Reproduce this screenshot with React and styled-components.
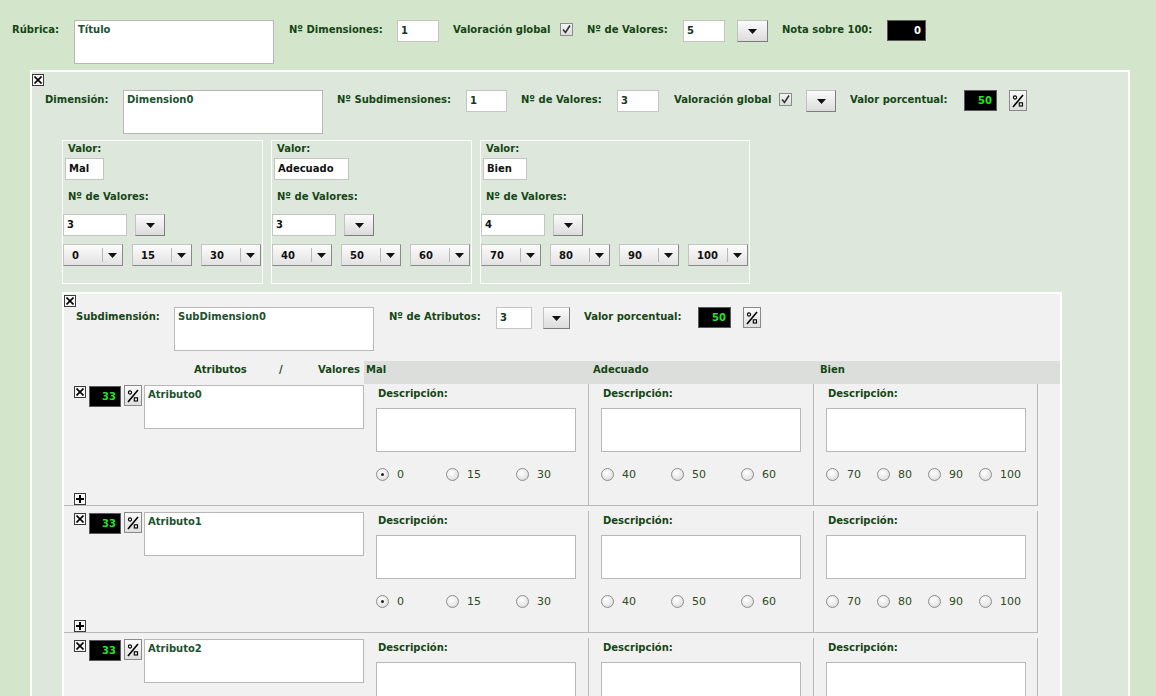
import React from "react";
import styled, { createGlobalStyle } from "styled-components";

const LABEL = "#144614";
const LINE = "#b9b9b9";
const BOLD_FONT = `"DejaVu Sans", Verdana, sans-serif`;

const GlobalStyle = createGlobalStyle`
  html, body {
    margin: 0;
    padding: 0;
    background: #d3e5cb;
  }
  body {
    font-family: ${BOLD_FONT};
    font-size: 10px;
    color: ${LABEL};
  }
`;

const Page = styled.div`
  height: 696px;
  overflow: hidden;
`;

const Line = styled.div`
  display: flex;
  align-items: flex-start;
  padding-left: ${(p) => p.$pl || 0}px;
  margin-top: ${(p) => p.$mt || 0}px;
`;

const Label = styled.span`
  flex: none;
  width: ${(p) => (p.$w ? p.$w + "px" : "auto")};
  margin-top: ${(p) => (p.$mt === undefined ? 3 : p.$mt)}px;
  margin-left: ${(p) => p.$ml || 0}px;
  font-weight: bold;
  font-size: 10px;
  line-height: 13px;
  color: ${LABEL};
  white-space: nowrap;
`;

const TextBox = styled.div`
  flex: none;
  box-sizing: border-box;
  width: ${(p) => p.$w || 200}px;
  height: 44px;
  margin-right: ${(p) => p.$mr || 0}px;
  padding: 2px 3px;
  background: #fff;
  border: 1px solid #b8b8b8;
  font-weight: bold;
  line-height: 14px;
  color: #1b5230;
`;

const Input = styled.div`
  flex: none;
  box-sizing: border-box;
  width: ${(p) => p.$w}px;
  height: 22px;
  margin-right: ${(p) => p.$mr || 0}px;
  margin-left: ${(p) => p.$ml || 0}px;
  padding-left: 3px;
  background: #fff;
  border: 1px solid #c4c4c4;
  font-weight: bold;
  line-height: 20px;
  color: ${(p) => p.$color || "#14361a"};
`;

const Check = styled.span`
  flex: none;
  box-sizing: border-box;
  width: 13px;
  height: 13px;
  margin-top: 3px;
  margin-right: ${(p) => p.$mr || 0}px;
  border: 1px solid #8c8c8c;
  background: linear-gradient(#f4f4f4, #dcdcdc);
  display: flex;
  align-items: center;
  justify-content: center;
`;

const DropBtn = styled.span`
  flex: none;
  box-sizing: border-box;
  width: ${(p) => p.$w || 30}px;
  height: 22px;
  margin-right: ${(p) => p.$mr || 0}px;
  border: 1px solid;
  border-color: #c2c2c2 #7d7d7d #7d7d7d #c2c2c2;
  background: linear-gradient(#fbfbfb, #dcdcdc);
  display: flex;
  align-items: center;
  justify-content: center;
`;

const Score = styled.span`
  flex: none;
  box-sizing: border-box;
  width: ${(p) => p.$w}px;
  height: 21px;
  margin-right: ${(p) => p.$mr || 0}px;
  margin-top: ${(p) => p.$mt || 0}px;
  padding-right: 4px;
  background: #000;
  border: 1px solid #5a5a5a;
  text-align: right;
  font-weight: bold;
  line-height: 19px;
  color: ${(p) => p.$color || "#22e622"};
`;

const PctBtn = styled.span`
  flex: none;
  box-sizing: border-box;
  width: 18px;
  height: 21px;
  margin-right: ${(p) => p.$mr || 0}px;
  margin-top: ${(p) => p.$mt || 0}px;
  border: 1px solid #8a8a8a;
  background: linear-gradient(#fafafa, #dedede);
  display: flex;
  align-items: center;
  justify-content: center;
`;

const SmallBtn = styled.span`
  flex: none;
  box-sizing: border-box;
  display: flex;
  align-items: center;
  justify-content: center;
  width: 12px;
  height: 12px;
  margin-top: ${(p) => p.$mt || 0}px;
  margin-right: ${(p) => p.$mr || 0}px;
  border: 1px solid #3a3a3a;
  background: #f6f6f6;
`;

const DimPanel = styled.div`
  width: 1100px;
  box-sizing: border-box;
  margin: 6px 0 0 30px;
  border: 2px solid #fff;
  background: #dde7dc;
  height: 640px;
`;

const ValueBoxes = styled.div`
  display: flex;
  gap: 8px;
  margin: 6px 0 0 30px;
`;

const ValueBox = styled.div`
  box-sizing: border-box;
  height: 144px;
  border: 1px solid #fff;
  padding: 1px 1px 0 0;
`;

const SelectRow = styled.div`
  display: flex;
  gap: 9px;
  margin-top: 8px;
`;

const Select = styled.span`
  box-sizing: border-box;
  width: 60px;
  height: 22px;
  border: 1px solid;
  border-color: #c4c4c4 #8a8a8a #8a8a8a #c4c4c4;
  background: linear-gradient(#fcfcfc, #e2e2e2);
  display: flex;
  align-items: center;
  font-weight: bold;
  color: #111;
`;

const SelectText = styled.span`
  flex: 1;
  padding-left: 8px;
`;

const SelectArrow = styled.span`
  width: 19px;
  height: 14px;
  border-left: 1px solid #b8b8b8;
  display: flex;
  align-items: center;
  justify-content: center;
`;

const SubPanel = styled.div`
  width: 1000px;
  box-sizing: border-box;
  margin: 8px 0 0 30px;
  border: 2px solid #fff;
  border-bottom: none;
  background: #f1f1f1;
  height: 420px;
`;

const HeaderRow = styled.div`
  display: flex;
  margin-top: 10px;
  height: 23px;
`;

const HeaderLeft = styled.div`
  width: 300px;
  display: flex;
  padding: 2px 0 0 130px;
  box-sizing: border-box;
  font-weight: bold;
  line-height: 13px;
`;

const HeaderWord = styled.span`
  width: ${(p) => (p.$w ? p.$w + "px" : "auto")};
  white-space: nowrap;
`;

const HeaderGrey = styled.div`
  flex: 1;
  display: flex;
  background: #dcdedb;
`;

const HeaderCell = styled.span`
  width: ${(p) => p.$w}px;
  padding: 2px 0 0 2px;
  font-weight: bold;
  line-height: 13px;
`;

const AttrRow = styled.div`
  display: flex;
  box-sizing: border-box;
  width: fit-content;
  height: 122px;
  margin-bottom: 5px;
  border-bottom: 1px solid ${LINE};
`;

const AttrLeft = styled.div`
  width: 300px;
  box-sizing: border-box;
  padding: 1px 0 0 10px;
  display: flex;
  flex-direction: column;
  justify-content: space-between;
`;

const AttrTop = styled.div`
  display: flex;
  align-items: flex-start;
`;

const Cell = styled.div`
  width: ${(p) => p.$w}px;
  box-sizing: border-box;
  border-right: 1px solid ${LINE};
  padding: 3px 0 0 12px;
`;

const DescBox = styled.div`
  width: 200px;
  height: 44px;
  box-sizing: border-box;
  margin-top: 8px;
  background: #fff;
  border: 1px solid #b8b8b8;
`;

const RadioGroup = styled.div`
  display: flex;
  margin-top: 16px;
`;

const RadioItem = styled.span`
  width: ${(p) => p.$pitch}px;
  display: flex;
  align-items: center;
  gap: 8px;
  font-family: "DejaVu Sans", Verdana, sans-serif;
  font-size: 11px;
  color: #2f4b22;
`;

const RadioCircle = styled.span`
  width: 13px;
  height: 13px;
  box-sizing: border-box;
  border-radius: 50%;
  border: 1px solid #8d8d8d;
  background: radial-gradient(circle at 40% 35%, #ffffff, #e9e9e9 55%, #cfcfcf);
  display: flex;
  align-items: center;
  justify-content: center;
  &::after {
    content: "";
    width: 3px;
    height: 3px;
    border-radius: 50%;
    background: ${(p) => (p.$on ? "#222" : "transparent")};
  }
`;

const Arrow = () => (
  <svg width="9" height="5" viewBox="0 0 9 5">
    <polygon points="0,0 9,0 4.5,5" fill="#111" />
  </svg>
);

const CheckMark = () => (
  <svg width="11" height="11" viewBox="0 0 11 11">
    <path d="M2 5.5 L4.5 8.5 L9 1.5" fill="none" stroke="#333" strokeWidth="1.6" />
  </svg>
);

const XIcon = () => (
  <svg width="8" height="8" viewBox="0 0 8 8">
    <path d="M0.5 0.5 L7.5 7.5 M7.5 0.5 L0.5 7.5" stroke="#000" strokeWidth="1.6" />
  </svg>
);

const PlusIcon = () => (
  <svg width="8" height="8" viewBox="0 0 8 8">
    <path d="M4 0 V8 M0 4 H8" stroke="#000" strokeWidth="2" />
  </svg>
);

const PctIcon = () => (
  <svg width="12" height="14" viewBox="0 0 12 14">
    <path d="M1 13 L11 1" stroke="#000" strokeWidth="1.6" />
    <circle cx="3" cy="3.5" r="1.6" fill="none" stroke="#000" strokeWidth="1.1" />
    <rect x="7.3" y="8.8" width="3.2" height="3.2" fill="none" stroke="#000" strokeWidth="1.1" />
  </svg>
);

const Drop = (props) => (
  <DropBtn {...props}>
    <Arrow />
  </DropBtn>
);

const valueGroups = [
  { name: "Mal", w: 39, col: 225, n: 3, vals: [0, 15, 30] },
  { name: "Adecuado", w: 75, col: 225, n: 3, vals: [40, 50, 60] },
  { name: "Bien", w: 44, col: 224, n: 4, vals: [70, 80, 90, 100] },
];

const attributes = ["Atributo0", "Atributo1", "Atributo2"];

function AttributeRow({ name }) {
  return (
    <AttrRow>
      <AttrLeft>
        <AttrTop>
          <SmallBtn $mt={1} $mr={3}>
            <XIcon />
          </SmallBtn>
          <Score $w={32} $mt={1} $mr={3}>
            33
          </Score>
          <PctBtn $mr={2}>
            <PctIcon />
          </PctBtn>
          <TextBox $w={220}>{name}</TextBox>
        </AttrTop>
        <SmallBtn>
          <PlusIcon />
        </SmallBtn>
      </AttrLeft>
      {valueGroups.map((g) => (
        <Cell key={g.name} $w={g.col}>
          <Label $mt={0} $ml={2}>
            Descripción:
          </Label>
          <DescBox />
          <RadioGroup>
            {g.vals.map((v, i) => (
              <RadioItem key={v} $pitch={g.n === 3 ? 70 : 51}>
                <RadioCircle $on={g.name === "Mal" && i === 0} />
                {v}
              </RadioItem>
            ))}
          </RadioGroup>
        </Cell>
      ))}
    </AttrRow>
  );
}

export default function App() {
  return (
    <Page>
      <GlobalStyle />
      <Line $pl={12} $mt={20}>
        <Label $w={62}>Rúbrica:</Label>
        <TextBox $mr={15}>Título</TextBox>
        <Label $w={108}>Nº Dimensiones:</Label>
        <Input $w={42} $mr={14}>1</Input>
        <Label $w={107}>Valoración global</Label>
        <Check $mr={14}>
          <CheckMark />
        </Check>
        <Label $w={96}>Nº de Valores:</Label>
        <Input $w={42} $mr={12}>5</Input>
        <Drop $w={31} $mr={14} />
        <Label $w={105}>Nota sobre 100:</Label>
        <Score $w={39} $color="#fff">
          0
        </Score>
      </Line>

      <DimPanel>
        <SmallBtn $mt={2}>
          <XIcon />
        </SmallBtn>
        <Line $pl={13} $mt={4}>
          <Label $w={78}>Dimensión:</Label>
          <TextBox $mr={14}>Dimension0</TextBox>
          <Label $w={129}>Nº Subdimensiones:</Label>
          <Input $w={41} $mr={14}>1</Input>
          <Label $w={96}>Nº de Valores:</Label>
          <Input $w={42} $mr={15}>3</Input>
          <Label $w={105}>Valoración global</Label>
          <Check $mr={14}>
            <CheckMark />
          </Check>
          <Drop $w={30} $mr={14} />
          <Label $w={114}>Valor porcentual:</Label>
          <Score $w={33} $mr={12}>
            50
          </Score>
          <PctBtn>
            <PctIcon />
          </PctBtn>
        </Line>

        <ValueBoxes>
          {valueGroups.map((g) => (
            <ValueBox key={g.name}>
              <Label $mt={1} $ml={5}>
                Valor:
              </Label>
              <Line $mt={3}>
                <Input $w={g.w} $ml={2} $color="#111">
                  {g.name}
                </Input>
              </Line>
              <Line $mt={10}>
                <Label $mt={0} $ml={5}>
                  Nº de Valores:
                </Label>
              </Line>
              <Line $mt={11}>
                <Input $w={64} $mr={8} $color="#111">
                  {g.n}
                </Input>
                <Drop $w={30} />
              </Line>
              <SelectRow>
                {g.vals.map((v) => (
                  <Select key={v}>
                    <SelectText>{v}</SelectText>
                    <SelectArrow>
                      <Arrow />
                    </SelectArrow>
                  </Select>
                ))}
              </SelectRow>
            </ValueBox>
          ))}
        </ValueBoxes>

        <SubPanel>
          <SmallBtn $mt={1}>
            <XIcon />
          </SmallBtn>
          <Line $pl={12}>
            <Label $w={98}>Subdimensión:</Label>
            <TextBox $mr={15}>SubDimension0</TextBox>
            <Label $w={107}>Nº de Atributos:</Label>
            <Input $w={36} $mr={11}>3</Input>
            <Drop $w={27} $mr={14} />
            <Label $w={114}>Valor porcentual:</Label>
            <Score $w={33} $mr={12}>
              50
            </Score>
            <PctBtn>
              <PctIcon />
            </PctBtn>
          </Line>

          <HeaderRow>
            <HeaderLeft>
              <HeaderWord $w={85}>Atributos</HeaderWord>
              <HeaderWord $w={39}>/</HeaderWord>
              <HeaderWord>Valores</HeaderWord>
            </HeaderLeft>
            <HeaderGrey>
              {valueGroups.map((g) => (
                <HeaderCell key={g.name} $w={g.col}>
                  {g.name}
                </HeaderCell>
              ))}
            </HeaderGrey>
          </HeaderRow>

          {attributes.map((a) => (
            <AttributeRow key={a} name={a} />
          ))}
        </SubPanel>
      </DimPanel>
    </Page>
  );
}
